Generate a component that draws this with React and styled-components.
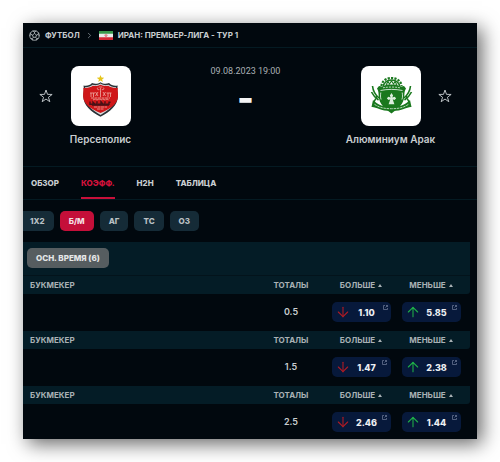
import React, { useState } from 'react';
import styled, { createGlobalStyle } from 'styled-components';
import { ArrowDown, ArrowUp, ChevronRight } from 'lucide-react';

const tabs = ['ОБЗОР', 'КОЭФФ.', 'H2H', 'ТАБЛИЦА'];
const markets = ['1X2', 'Б/М', 'АГ', 'ТС', 'ОЗ'];
const totals = [
  { total: '0.5', over: '1.10', under: '5.85' },
  { total: '1.5', over: '1.47', under: '2.38' },
  { total: '2.5', over: '2.46', under: '1.44' },
];

const BallIcon = () => (
  <svg width="11" height="11" viewBox="0 0 22 22" fill="none" stroke="#b4babd" strokeWidth="1.7">
    <circle cx="11" cy="11" r="9.6" />
    <path d="M11 7l4 3-1.5 4.600h-5L7 10z" />
    <path d="M11 7V3.600L7.200 2M11 3.600L14.800 2M15 10l3.400-1.200.8-3.400M18.400 8.800l2.200 3.200M13.500 14.600l2.200 3-1 3M15.700 17.600l3.200-.6M8.500 14.600l-2.200 3 1 3M6.300 17.600l-3.200-.6M7 10L3.600 8.800l-.8-3.400M3.600 8.800L1.400 12" />
  </svg>
);

const IranFlag = () => (
  <svg width="14" height="9" viewBox="0 0 28 18">
    <path fill="#e9ecec" d="M0 0h28v18H0z" />
    <path fill="#38994c" d="M0 0h28v5.500H0z" />
    <path fill="#d32835" d="M0 12.500h28V18H0z" />
    <path stroke="#d32835" strokeWidth="1.2" fill="none" d="M14 6.500v5M12.400 7c-1 1.500-.6 3.400 1 4M15.600 7c1 1.500.6 3.400-1 4" />
  </svg>
);

const StarIcon = () => (
  <svg width="14" height="14" viewBox="0 0 28 28" fill="none" stroke="#c3c8cb" strokeWidth="1.9">
    <path d="M14 2l3 8.700 9.300.2-7.400 5.600 2.700 8.900L14 20.100l-7.600 5.300 2.700-8.900-7.400-5.600 9.300-.2z" />
  </svg>
);

const PersepolisLogo = () => (
  <svg width="60" height="60" viewBox="0 0 60 60">
    <path fill="#e5c51c" d="M29.500 9l1 2.600 2.800.1-2.200 1.700.8 2.700-2.400-1.500-2.300 1.500.8-2.700-2.300-1.700 2.800-.1z" />
    <path fill="#293237" d="M12.500 19.500c3.500.7 6.600-.2 8.500-2.500 3.500 1.300 5.800.8 8.500-.8 2.800 1.600 5 2.100 8.600.8 2 2.300 5 3.200 8.600 2.500-1 3.500.4 7 .2 11-.3 9-7.600 15-17.400 20.300C19.700 45.500 12.600 39.500 12.300 30.500c-.1-4 1.200-7.500.2-11z" />
    <path fill="#d8dadb" d="M14 21.300c3.300.1 5.700-.8 7.500-2.500 3.200.8 5.500.3 8-1.200 2.600 1.500 4.800 2 8.100 1.200 1.800 1.700 4.200 2.600 7.500 2.500-.6 3 .5 6 .3 9.300C45 38.500 38.300 44 29.500 49 20.800 44 14 38.500 13.700 30.600c-.1-3.300.9-6.300.3-9.300z" />
    <path fill="#cf1719" d="M12.300 21.700c4 .6 7.300-.4 9.500-2 2.800.7 5.100.3 7.700-1 2.700 1.300 5 1.700 7.800 1 2.200 1.600 5.500 2.600 9.500 2-.4 3 .4 5.800.2 8.800-.5 7.500-7.700 12.700-17.500 16.500C19.700 43.200 12.600 38 12.100 30.500c-.1-3 .5-5.800.2-8.800z" />
    <g fill="none" stroke="#eb9d95" strokeWidth=".9">
      <path d="M27 21.500c-1.500 1.500-.2 2.500 1.300 2.100M32.200 21.500c1.500 1.500.2 2.500-1.300 2.100M28.200 21h3M29.600 22v4" />
      <path d="M19 27h5M20 27v4M22.500 27v4M24.500 26l2.500 4M27 26l-2.500 4M29.500 25v6M32 26l2.500 4M34.500 26L32 30M35.500 27h5M37 27v4M39.500 27v4" />
      <path d="M20 32h19M22 34l2-1 2 1 2-1 2 1 2-1 2 1 2-1 2 1M23 41h13M26 43h7" strokeDasharray="3 .5" />
    </g>
    <path fill="none" stroke="#471216" strokeWidth="1.4" d="M19 35.500v2.700h3v-2l2 2h2v-3M27 38.200h3v-2.500l2 2.500h2v-3M35 38.200h3v-2h1.500M21 39h17" />
  </svg>
);

const AluminiumLogo = () => (
  <svg width="60" height="60" viewBox="0 0 60 60" fill="none" stroke="#1a781e">
    <path strokeWidth="2.2" strokeDasharray="2.2 1.2" d="M20.500 20a10 8 0 0 1 20 0" />
    <path strokeWidth="1.6" d="M22.500 20.500a8 6.500 0 0 1 16 0" />
    <path strokeWidth="1.1" d="M25 19l2-3.500 1.500 2.500 2-3 2 3 1.500-2.500 2 3.500" />
    <path fill="#1a781e" stroke="none" d="M18 20c3 1 5.500.2 7.500-1.500h10c2 1.700 4.500 2.500 7.500 1.500l2 2.500c-1.800 3-1.500 5-1.700 8-.5 7-5.800 12-12.800 17-7-5-12.300-10-12.800-17-.2-3 .1-5-1.700-8z" />
    <path stroke="#d8eadb" strokeWidth=".9" d="M19.500 24.500c7-1.500 15-1.500 22 0M19.800 26.500c-.3 2-.6 5 .3 7M41.200 26.500c.3 2 .6 5-.3 7" />
    <path stroke="#b9dabd" strokeWidth="1" strokeDasharray="2 1" d="M22 21.800c5-1 12-1 17 0" />
    <path fill="#dceedd" stroke="none" d="M30.500 27l1.600 2.400-.8 2.100 2.500-.8 1.300 1.700-1.700 1.700-1.700-.8 1.700 5h-5.800l1.700-5-1.700.8-1.700-1.700 1.300-1.700 2.500.8-.8-2.100z" />
    <path strokeWidth="1.6" d="M11.500 20c.5 5 3 9 6.500 12M10.500 26c2 4 4 6 7 8M13 36l3-6M49.500 20c-.5 5-3 9-6.500 12M50.500 26c-2 4-4 6-7 8M48 36l-3-6" />
    <path fill="#1a781e" stroke="none" d="M12 34c5 5 11 7 18.500 7S44 39 49 34l1.500 7c-5-.4-8 4-20 4s-15-4.400-20-4z" />
    <path stroke="#c3dec5" strokeWidth=".9" strokeDasharray="2.500 .8" d="M13.500 38.300c5 3.500 10 4.400 17 4.400s12-.9 17-4.400" />
  </svg>
);

const PopoutIcon = () => (
  <svg width="5" height="5" viewBox="0 0 10 10" fill="none" stroke="#6d7a97" strokeWidth="1.5">
    <path d="M4 1H1v8h8V6M6 1h3v3M9 1L5 5" />
  </svg>
);

const Team = ({ name, children }) => (
  <TeamBox>
    <Logo>{children}</Logo>
    <TeamName>{name}</TeamName>
  </TeamBox>
);

const Odd = ({ value, up }) => (
  <OddButton type="button">
    {up ? <ArrowUp size={16} color="#1fae48" strokeWidth={1.6} /> : <ArrowDown size={16} color="#b01c24" strokeWidth={1.6} />}
    <span>{value}</span>
    <PopoutIcon />
  </OddButton>
);

const TotalsTable = ({ total, over, under }) => (
  <Table>
    <thead>
      <tr>
        <HeadCell scope="col" $first>БУКМЕКЕР</HeadCell>
        <HeadCell scope="col">ТОТАЛЫ</HeadCell>
        <HeadCell scope="col">БОЛЬШЕ<SortMark /></HeadCell>
        <HeadCell scope="col" $last>МЕНЬШЕ<SortMark /></HeadCell>
      </tr>
    </thead>
    <tbody>
      <tr>
        <Cell />
        <Cell>{total}</Cell>
        <Cell><Odd value={over} /></Cell>
        <Cell $last><Odd value={under} up /></Cell>
      </tr>
    </tbody>
  </Table>
);

export default function App() {
  const [tab, setTab] = useState('КОЭФФ.');
  const [market, setMarket] = useState('Б/М');

  return (
    <>
      <GlobalStyle />
      <Page>
        <Panel>
          <Breadcrumb>
            <BallIcon />
            <CrumbLink href="#football">ФУТБОЛ</CrumbLink>
            <ChevronRight size={9} color="#8a9398" />
            <IranFlag />
            <CrumbLink href="#league">ИРАН: ПРЕМЬЕР-ЛИГА - ТУР 1</CrumbLink>
          </Breadcrumb>

          <Match>
            <StarButton type="button" aria-label="Персеполис"><StarIcon /></StarButton>
            <Team name="Персеполис"><PersepolisLogo /></Team>
            <MatchInfo>
              <time>09.08.2023 19:00</time>
              <Score>-</Score>
            </MatchInfo>
            <Team name="Алюминиум Арак"><AluminiumLogo /></Team>
            <StarButton type="button" aria-label="Алюминиум Арак"><StarIcon /></StarButton>
          </Match>

          <Tabs>
            {tabs.map((t) => (
              <TabLink key={t} href="#tab" $active={t === tab} onClick={() => setTab(t)}>{t}</TabLink>
            ))}
          </Tabs>

          <Markets>
            {markets.map((m) => (
              <Pill key={m} type="button" $active={m === market} onClick={() => setMarket(m)}>{m}</Pill>
            ))}
          </Markets>

          <Periods>
            <PeriodButton type="button">ОСН. ВРЕМЯ (6)</PeriodButton>
          </Periods>
          {totals.map((row) => <TotalsTable key={row.total} {...row} />)}
        </Panel>
      </Page>
    </>
  );
}

const GlobalStyle = createGlobalStyle`
  * {
    box-sizing: border-box;
  }

  body {
    margin: 0;
    background: #fff;
    color: #c8cdd0;
    font-family: Inter, Roboto, sans-serif;
  }

  button {
    font-family: inherit;
    border: none;
    padding: 0;
    cursor: pointer;
  }

  a {
    color: inherit;
    text-decoration: none;
  }

  svg {
    display: block;
    flex: none;
  }
`;

const Page = styled.div`
  padding: 23px;
`;

const Panel = styled.main`
  background: #01080e;
  box-shadow: 5px 5px 18px rgba(0, 0, 0, 0.6);
  overflow: hidden;
  padding-bottom: 7px;
`;

const Breadcrumb = styled.nav`
  display: flex;
  align-items: center;
  gap: 5px;
  height: 25px;
  padding: 0 6px;
  border-bottom: 1px solid #041a22;
`;

const CrumbLink = styled.a`
  font-size: 8px;
  font-weight: 700;
  white-space: nowrap;
`;

const Match = styled.section`
  display: grid;
  grid-template-columns: 14px 95px 1fr 95px 14px;
  padding: 18px 25px 20px 16px;
`;

const StarButton = styled.button`
  display: flex;
  align-items: center;
  height: 60px;
  background: none;
`;

const TeamBox = styled.div`
  display: flex;
  flex-direction: column;
  align-items: center;
  gap: 6px;
`;

const Logo = styled.div`
  width: 60px;
  height: 60px;
  border-radius: 8px;
  background: #fff;
  overflow: hidden;
`;

const TeamName = styled.div`
  font-size: 10px;
  line-height: 14px;
  font-weight: 600;
  white-space: nowrap;
`;

const MatchInfo = styled.div`
  display: flex;
  flex-direction: column;
  align-items: center;
  font-family: Roboto, Inter, sans-serif;
  font-size: 9px;
  line-height: 10px;
  color: #aab0b4;
`;

const Score = styled.div`
  font-family: Inter, sans-serif;
  font-size: 36px;
  line-height: 44px;
  font-weight: 800;
  color: #f3f3f4;
`;

const Tabs = styled.nav`
  display: flex;
  gap: 22px;
  padding: 0 8px;
  border-top: 1px solid #041a22;
  border-bottom: 1px solid #041a22;
`;

const TabLink = styled.a`
  height: 32px;
  font-size: 8px;
  line-height: 32px;
  font-weight: 800;
  color: ${({ $active }) => ($active ? '#d5123c' : '#c8cdd0')};
  box-shadow: ${({ $active }) => ($active ? 'inset 0 -2px #c8103a' : 'none')};
`;

const Markets = styled.div`
  display: flex;
  gap: 6px;
  padding: 11px 0;
`;

const Pill = styled.button`
  height: 20px;
  padding: 0 9px;
  border-radius: 5px;
  font-size: 8px;
  font-weight: 800;
  color: ${({ $active }) => ($active ? '#f4dfe4' : '#b9c0c4')};
  background: ${({ $active }) => ($active ? '#c40f39' : '#152b37')};

  &:first-child {
    padding-left: 7px;
    border-radius: 0 5px 5px 0;
  }
`;

const Periods = styled.div`
  margin-right: 7px;
  padding: 6px 4px 7px;
  background: #041c26;
  border-bottom: 1px solid #03131b;
`;

const PeriodButton = styled.button`
  display: block;
  height: 20px;
  padding: 0 9px;
  border-radius: 5px;
  font-size: 8px;
  font-weight: 800;
  color: #e4e6e7;
  background: #565d60;
`;

const Table = styled.table`
  width: calc(100% - 7px);
  table-layout: fixed;
  border-collapse: collapse;

  & + & {
    margin-top: 9px;
  }
`;

const HeadCell = styled.th`
  width: ${({ $first, $last }) => ($first ? 'auto' : $last ? '74px' : '70px')};
  height: 18px;
  padding: ${({ $first, $last }) => ($first ? '0 0 0 7px' : $last ? '0 4px 0 0' : '0')};
  background: #041c26;
  border-radius: ${({ $last }) => ($last ? '0 0 3px 0' : '0')};
  font-size: 8px;
  line-height: 10px;
  font-weight: 700;
  color: #a9b1b5;
  text-align: ${({ $first }) => ($first ? 'left' : 'center')};
`;

const SortMark = styled.span`
  display: inline-block;
  margin: 0 0 1px 3px;
  border: 2px solid transparent;
  border-top: none;
  border-bottom: 3px solid #a9b1b5;
`;

const Cell = styled.td`
  padding: ${({ $last }) => ($last ? '8px 4px 0 0' : '8px 0 0')};
  font-size: 9px;
  line-height: 20px;
  font-weight: 600;
  text-align: center;
`;

const OddButton = styled.button`
  display: flex;
  align-items: center;
  justify-content: space-between;
  width: 59px;
  height: 20px;
  margin: 0 auto;
  padding: 0 3px;
  border-radius: 5px;
  background: #07193b;
  color: #eceef2;
  font-size: 9px;
  font-weight: 800;

  svg:last-child {
    align-self: flex-start;
    margin-top: 3px;
  }
`;
